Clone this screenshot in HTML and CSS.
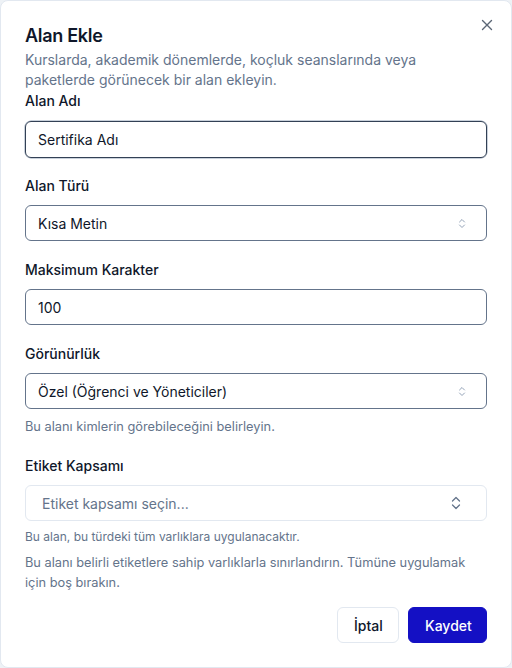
FILE: index.html
```html
<!DOCTYPE html>
<html lang="tr">
<head>
<meta charset="utf-8">
<title>Alan Ekle</title>
<link rel="stylesheet" href="styles.css">
</head>
<body>
<div class="dialog">
  <button class="close" aria-label="Kapat">
    <svg width="12" height="12" viewBox="0 0 12 12"><path d="M1.5 1.5 L10.5 10.5 M10.5 1.5 L1.5 10.5" stroke="#334155" stroke-width="1.4" stroke-linecap="round"/></svg>
  </button>
  <div class="header">
    <h2 class="title">Alan Ekle</h2>
    <p class="desc">Kurslarda, akademik dönemlerde, koçluk seanslarında veya paketlerde görünecek bir alan ekleyin.</p>
  </div>
  <div class="field first">
    <label class="label">Alan Adı</label>
    <div class="input focused">Sertifika Adı</div>
  </div>
  <div class="field second">
    <label class="label">Alan Türü</label>
    <div class="input select"><span>Kısa Metin</span>
      <svg class="chev" width="8" height="11" viewBox="0 0 8 11"><path d="M1.5 4 L4 1.5 L6.5 4 M1.5 7 L4 9.5 L6.5 7" fill="none" stroke="#94a3b8" stroke-width="1" stroke-linecap="round" stroke-linejoin="round"/></svg>
    </div>
  </div>
  <div class="field">
    <label class="label">Maksimum Karakter</label>
    <div class="input">100</div>
  </div>
  <div class="field">
    <label class="label">Görünürlük</label>
    <div class="input select"><span>Özel (Öğrenci ve Yöneticiler)</span>
      <svg class="chev" width="8" height="11" viewBox="0 0 8 11"><path d="M1.5 4 L4 1.5 L6.5 4 M1.5 7 L4 9.5 L6.5 7" fill="none" stroke="#94a3b8" stroke-width="1" stroke-linecap="round" stroke-linejoin="round"/></svg>
    </div>
    <p class="help">Bu alanı kimlerin görebileceğini belirleyin.</p>
  </div>
  <div class="field">
    <label class="label">Etiket Kapsamı</label>
    <div class="input combo"><span>Etiket kapsamı seçin...</span>
      <svg class="chev2" width="12" height="14" viewBox="0 0 12 14"><path d="M2.5 5 L6 1.5 L9.5 5 M2.5 9 L6 12.5 L9.5 9" fill="none" stroke="#64748b" stroke-width="1.3" stroke-linecap="round" stroke-linejoin="round"/></svg>
    </div>
    <p class="help h2">Bu alan, bu türdeki tüm varlıklara uygulanacaktır.</p>
    <p class="help h3">Bu alanı belirli etiketlere sahip varlıklarla sınırlandırın. Tümüne uygulamak için boş bırakın.</p>
  </div>
  <div class="footer">
    <button class="btn outline">İptal</button>
    <button class="btn primary">Kaydet</button>
  </div>
</div>
</body>
</html>
```
FILE: styles.css
```css
* { box-sizing: border-box; }
html, body { margin: 0; padding: 0; }
body {
  background: #eef2f6;
  font-family: Inter, "Noto Sans", sans-serif;
  color: #0f172a;
  width: 512px;
  height: 668px;
}
.dialog {
  position: relative;
  width: 512px;
  height: 668px;
  background: #fff;
  border: 1px solid #e2e8f0;
  border-radius: 8px;
  padding: 23px 24px 24px 24px;
}
.close {
  position: absolute;
  top: 16px;
  right: 16px;
  width: 16px;
  height: 16px;
  padding: 0;
  border: 0;
  background: none;
  display: flex;
  align-items: center;
  justify-content: center;
  opacity: 0.8;
}
.title {
  margin: 0;
  font-size: 18px;
  line-height: 24px;
  font-weight: 600;
  letter-spacing: -0.3px;
}
.desc {
  margin: 2px 0 0 0;
  font-size: 14px;
  line-height: 19.5px;
  color: #64748b;
}
.field {
  display: flex;
  flex-direction: column;
  margin-top: 19px;
}
.field.first { margin-top: 2px; }
.field.second { margin-top: 18px; }
.label {
  font-size: 14px;
  line-height: 20px;
  font-weight: 500;
  margin-bottom: 9px;
}
.first .label { margin-bottom: 10px; }
.input {
  height: 36px;
  border: 1px solid #64748b;
  border-radius: 6px;
  padding: 0 12px;
  display: flex;
  align-items: center;
  font-size: 14px;
  color: #0f172a;
}
.input.focused {
  height: 37px;
  border: 1.5px solid #334155;
  box-shadow: 0 0 0 0.5px #94a3b8;
}
.select, .combo { justify-content: space-between; }
.chev { margin-right: 8px; }
.combo {
  border-color: #e2e8f0;
  padding: 0 16px 0 16px;
  color: #64748b;
  height: 36px;
}
.chev2 { margin-right: 8px; }
.help {
  margin: 8px 0 0 0;
  font-size: 12.8px;
  line-height: 20px;
  color: #64748b;
}
.help.h2 { margin-top: 6px; font-size: 12px; }
.help.h3 { margin-top: 6px; }
.footer {
  display: flex;
  justify-content: flex-end;
  gap: 9px;
  margin-top: 14px;
}
.btn {
  height: 36px;
  border-radius: 6px;
  font-family: Inter, "Noto Sans", sans-serif;
  font-size: 14px;
  font-weight: 500;
  padding: 0 16px;
}
.outline {
  background: #fff;
  border: 1px solid #e2e8f0;
  color: #0f172a;
  width: 62px;
}
.primary {
  background: #1410c4;
  border: 1px solid #1410c4;
  color: #fff;
  width: 79px;
}
```
